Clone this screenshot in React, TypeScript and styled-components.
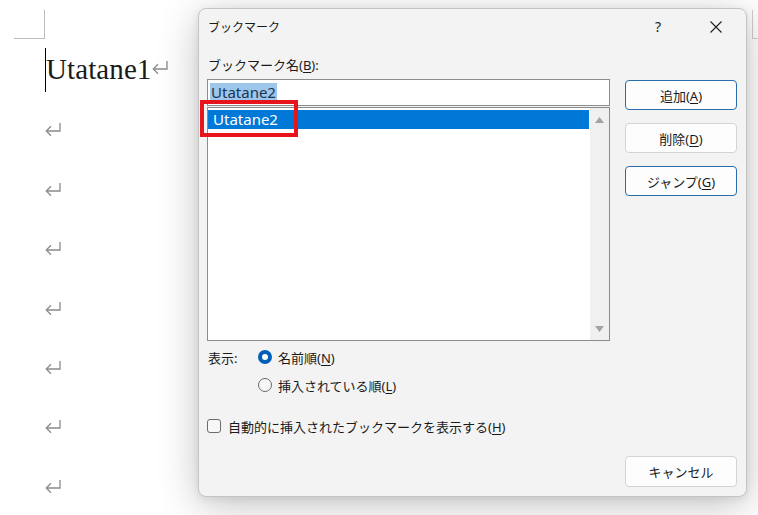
import { createGlobalStyle, styled } from 'styled-components';

const GlobalStyle = createGlobalStyle`
  html, body {
    margin: 0;
    padding: 0;
    background: #fff;
  }
  * {
    box-sizing: border-box;
  }
`;

const UI_FONT = `"Noto Sans", "Noto Sans CJK JP", sans-serif`;

function ReturnMark() {
  return (
    <svg width="16" height="15" viewBox="0 0 16 15" fill="none">
      <path d="M15 1V9H1.5" stroke="#8a8a8a" strokeWidth="1.3" />
      <path d="M6 4.2L1.3 9L6 13.8" stroke="#8a8a8a" strokeWidth="1.3" />
    </svg>
  );
}

function CloseIcon() {
  return (
    <svg width="12" height="12" viewBox="0 0 12 12">
      <path d="M0.5 0.5L11.5 11.5M11.5 0.5L0.5 11.5" stroke="#1f1f1f" strokeWidth="1.1" />
    </svg>
  );
}

function Arrow({ up }: { up?: boolean }) {
  return (
    <svg width="9" height="6" viewBox="0 0 9 6">
      <path d={up ? 'M0 6L4.5 0L9 6Z' : 'M0 0L4.5 6L9 0Z'} fill="#a3a3a3" />
    </svg>
  );
}

export default function App() {
  const emptyLines = [0, 1, 2, 3, 4, 5, 6];

  return (
    <StyledScreen>
      <GlobalStyle />
      <StyledDocument>
        <StyledDocColumn>
          <StyledCornerMark />
          <StyledParagraph $first>
            <StyledCaret />
            <StyledDocText>Utatane1</StyledDocText>
            <StyledMarkWrap>
              <ReturnMark />
            </StyledMarkWrap>
          </StyledParagraph>
          {emptyLines.map(i => (
            <StyledParagraph key={i}>
              <ReturnMark />
            </StyledParagraph>
          ))}
        </StyledDocColumn>
        <StyledRightCorner />
      </StyledDocument>

      <StyledDialog>
        <StyledTitleBar>
          <StyledTitle>ブックマーク</StyledTitle>
          <StyledHelp>?</StyledHelp>
          <StyledClose>
            <CloseIcon />
          </StyledClose>
        </StyledTitleBar>

        <StyledBody>
          <StyledLeftColumn>
            <StyledLabel>
              ブックマーク名(<u>B</u>):
            </StyledLabel>
            <StyledInput>
              <StyledSelectedText>Utatane2</StyledSelectedText>
            </StyledInput>
            <StyledList>
              <StyledItems>
                <StyledItem $selected>Utatane2</StyledItem>
              </StyledItems>
              <StyledScrollbar>
                <Arrow up />
                <Arrow />
              </StyledScrollbar>
            </StyledList>
          </StyledLeftColumn>

          <StyledButtonColumn>
            <StyledButton $default>
              追加(<u>A</u>)
            </StyledButton>
            <StyledButton>
              削除(<u>D</u>)
            </StyledButton>
            <StyledButton $default>
              ジャンプ(<u>G</u>)
            </StyledButton>
          </StyledButtonColumn>
        </StyledBody>

        <StyledOptions>
          <StyledOptionRow>
            <StyledOptionLabel>表示:</StyledOptionLabel>
            <StyledRadio $checked />
            <span>
              名前順(<u>N</u>)
            </span>
          </StyledOptionRow>
          <StyledOptionRow $indent>
            <StyledRadio />
            <span>
              挿入されている順(<u>L</u>)
            </span>
          </StyledOptionRow>
          <StyledCheckRow>
            <StyledCheckbox />
            <span>
              自動的に挿入されたブックマークを表示する(<u>H</u>)
            </span>
          </StyledCheckRow>
        </StyledOptions>

        <StyledFooter>
          <StyledButton>キャンセル</StyledButton>
        </StyledFooter>

        <StyledHighlight />
      </StyledDialog>
    </StyledScreen>
  );
}

const StyledScreen = styled.div`
  position: relative;
  width: 758px;
  height: 515px;
  overflow: hidden;
  background: #fff;
`;

const StyledDocument = styled.div`
  display: flex;
  justify-content: space-between;
  height: 100%;
`;

const StyledDocColumn = styled.div`
  display: flex;
  flex-direction: column;
  padding-top: 10px;
`;

const StyledCornerMark = styled.div`
  width: 31px;
  height: 29px;
  margin-left: 14px;
  border-right: 1px solid #bdbdbd;
  border-bottom: 1px solid #bdbdbd;
`;

const StyledRightCorner = styled.div`
  width: 6px;
  height: 29px;
  margin-top: 10px;
  border-left: 1px solid #cfcfcf;
  border-bottom: 1px solid #cfcfcf;
`;

const StyledParagraph = styled.div<{ $first?: boolean }>`
  display: flex;
  align-items: center;
  height: 60px;
  margin-top: ${({ $first }) => ($first ? '1px' : '0')};
  padding-left: ${({ $first }) => ($first ? '45px' : '45px')};
  padding-top: ${({ $first }) => ($first ? '0' : '2px')};
`;

const StyledCaret = styled.span`
  width: 1px;
  height: 44px;
  margin-top: 2px;
  background: #000;
`;

const StyledDocText = styled.span`
  font-family: 'Liberation Serif', serif;
  font-size: 29px;
  line-height: 1;
  color: #1a1a1a;
  letter-spacing: 0.1px;
`;

const StyledMarkWrap = styled.span`
  display: flex;
  margin-left: 1px;
  margin-top: -3px;
`;

const StyledDialog = styled.section`
  position: absolute;
  left: 198px;
  top: 8px;
  width: 549px;
  height: 489px;
  display: flex;
  flex-direction: column;
  background: #f3f3f3;
  border: 1px solid #c4c4c4;
  border-radius: 8px;
  box-shadow: 0 8px 40px rgba(0, 0, 0, 0.24), 0 2px 8px rgba(0, 0, 0, 0.08);
  font-family: ${UI_FONT};
  font-size: 13px;
  color: #1a1a1a;

  u {
    text-decoration: underline;
    text-underline-offset: 2px;
  }
`;

const StyledTitleBar = styled.div`
  display: flex;
  align-items: center;
  height: 35px;
  padding-left: 9px;
`;

const StyledTitle = styled.div`
  flex: 1;
  font-size: 12px;
  font-family: "Noto Sans CJK JP", sans-serif;
`;

const StyledHelp = styled.div`
  width: 40px;
  text-align: center;
  font-size: 14px;
  color: #222;
`;

const StyledClose = styled.div`
  display: flex;
  justify-content: center;
  align-items: center;
  width: 40px;
  margin: 0 10px 0 18px;
`;

const StyledBody = styled.div`
  display: grid;
  grid-template-columns: 403px 112px;
  column-gap: 15px;
  padding: 11px 9px 0 8px;
`;

const StyledLeftColumn = styled.div`
  display: flex;
  flex-direction: column;
`;

const StyledLabel = styled.div`
  height: 20px;
  line-height: 20px;
  padding-left: 1px;
`;

const StyledInput = styled.div`
  display: flex;
  align-items: center;
  height: 27px;
  margin-top: 4px;
  padding-left: 2px;
  background: #fff;
  border: 1px solid #8c8c8c;
  font-size: 15px;
`;

const StyledSelectedText = styled.span`
  background: #9dc6ea;
  color: #173552;
  line-height: 19px;
  padding: 0 1px;
`;

const StyledList = styled.div`
  display: flex;
  height: 234px;
  margin-top: 1px;
  background: #fff;
  border: 1px solid #8c8c8c;
`;

const StyledItems = styled.div`
  flex: 1;
  padding: 2px 1px 0 0;
`;

const StyledItem = styled.div<{ $selected?: boolean }>`
  height: 19px;
  line-height: 19px;
  padding-left: 5px;
  font-size: 15px;
  background: ${({ $selected }) => ($selected ? '#0078d7' : 'transparent')};
  color: ${({ $selected }) => ($selected ? '#fff' : '#1a1a1a')};
`;

const StyledScrollbar = styled.div`
  display: flex;
  flex-direction: column;
  align-items: center;
  justify-content: space-between;
  width: 19px;
  padding: 9px 0 8px;
  background: #f0f0f0;
`;

const StyledButtonColumn = styled.div`
  display: flex;
  flex-direction: column;
  gap: 13px;
  padding-top: 25px;
`;

const StyledButton = styled.button<{ $default?: boolean }>`
  width: 112px;
  height: 30px;
  padding: 0;
  border-radius: 4px;
  background: #fdfdfd;
  border: 1px solid ${({ $default }) => ($default ? '#2b6cae' : '#d4d4d4')};
  font-family: ${UI_FONT};
  font-size: 13px;
  color: #1a1a1a;
`;

const StyledOptions = styled.div`
  display: flex;
  flex-direction: column;
  padding: 6px 0 0 8px;
`;

const StyledOptionRow = styled.div<{ $indent?: boolean }>`
  display: flex;
  align-items: center;
  gap: 6px;
  height: 20px;
  padding-left: ${({ $indent }) => ($indent ? '51px' : '1px')};
  margin-top: ${({ $indent }) => ($indent ? '8px' : '0')};
`;

const StyledOptionLabel = styled.span`
  width: 44px;
`;

const StyledRadio = styled.span<{ $checked?: boolean }>`
  width: 14px;
  height: 14px;
  border-radius: 50%;
  background: ${({ $checked }) => ($checked ? '#fff' : '#f7f7f7')};
  border: ${({ $checked }) => ($checked ? '4px solid #005fb8' : '1px solid #6b6b6b')};
`;

const StyledCheckRow = styled.div`
  display: flex;
  align-items: center;
  gap: 7px;
  height: 20px;
  margin-top: 21px;
`;

const StyledCheckbox = styled.span`
  width: 14px;
  height: 14px;
  border-radius: 3px;
  background: #f7f7f7;
  border: 1px solid #6b6b6b;
`;

const StyledFooter = styled.div`
  display: flex;
  justify-content: flex-end;
  margin-top: auto;
  padding: 0 9px 9px 0;

  button {
    height: 31px;
  }
`;

const StyledHighlight = styled.div`
  position: absolute;
  left: 1px;
  top: 91px;
  width: 98px;
  height: 37px;
  border: 4px solid #e8141c;
`;
